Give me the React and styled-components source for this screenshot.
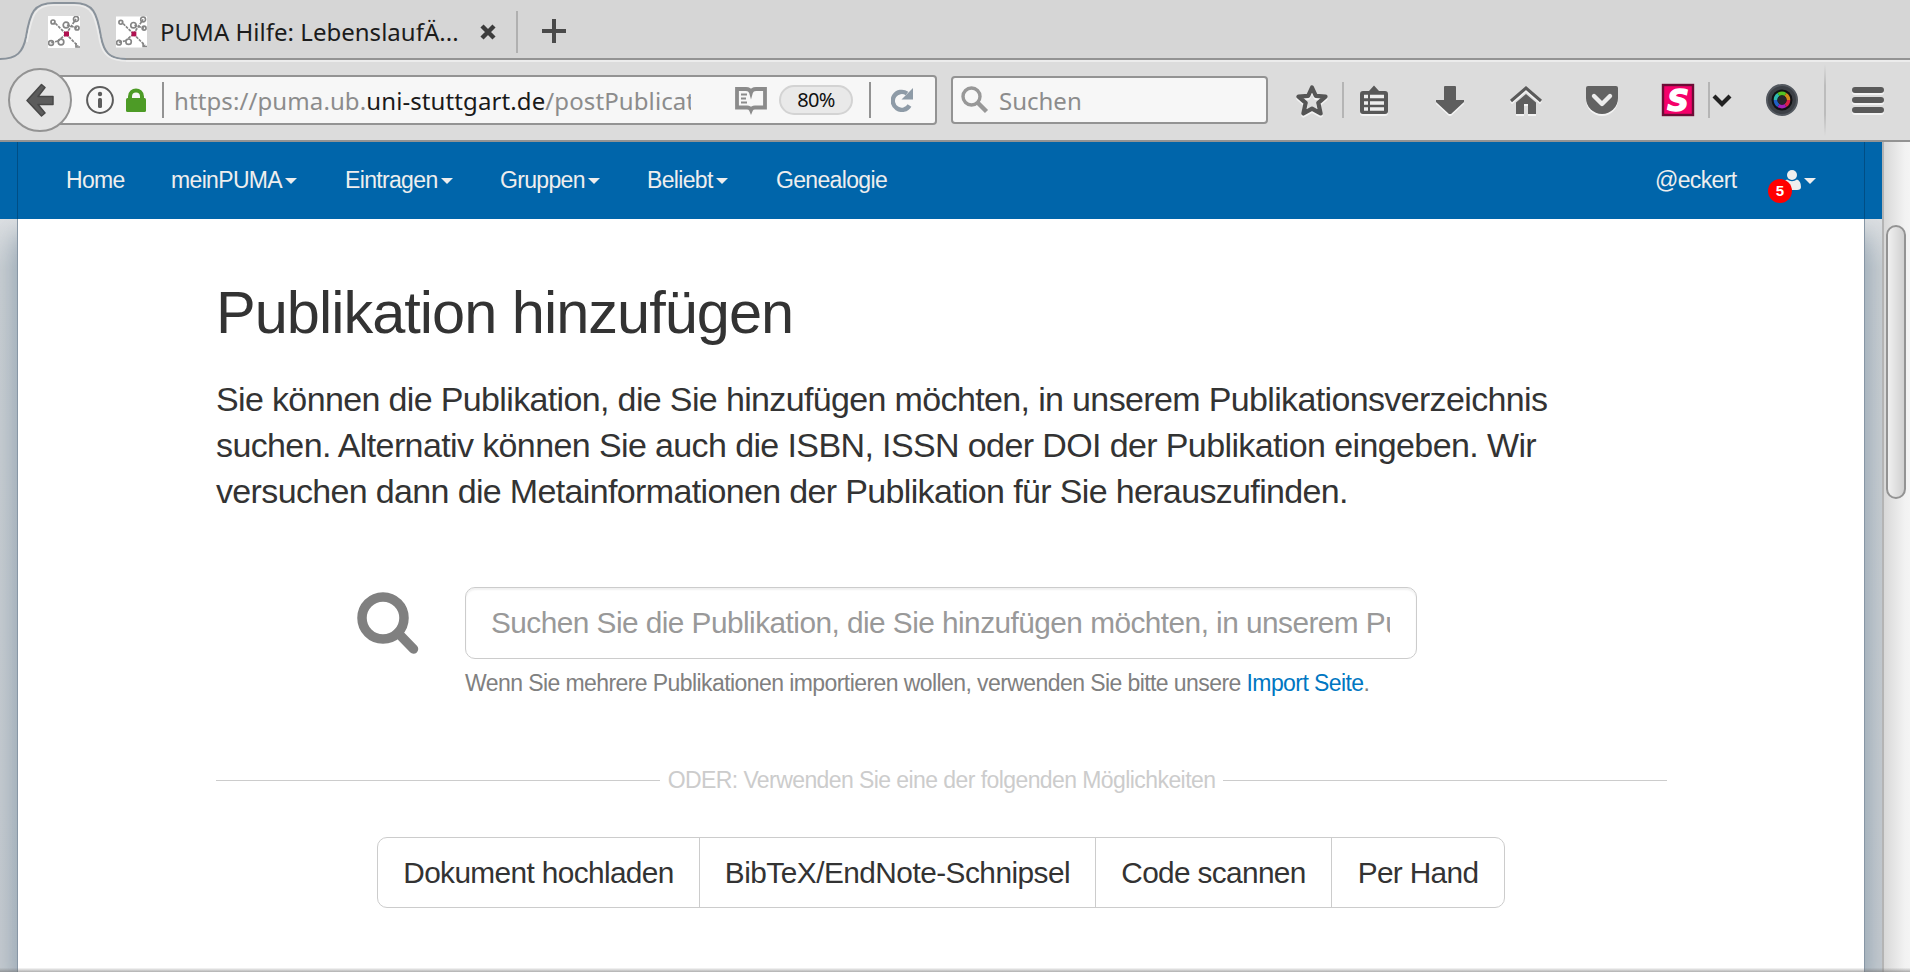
import React from 'react';
import styled, { createGlobalStyle, css } from 'styled-components';

const ui = '"Noto Sans", "Open Sans", sans-serif';
const sans = '"Liberation Sans", Arial, sans-serif';

const Global = createGlobalStyle`
  *, *::before, *::after { box-sizing: border-box; }
  html, body { margin: 0; padding: 0; overflow: hidden; }
  body { background: #dcdcdc; font-family: ${sans}; }
`;

const Window = styled.div`
  width: 1910px;
  height: 972px;
  display: flex;
  flex-direction: column;
  overflow: hidden;
`;

/* ---------- browser chrome ---------- */
const TabStrip = styled.div`
  position: relative;
  height: 62px;
  flex: none;
  display: flex;
  align-items: flex-start;
  background: #d6d6d6;
  border-bottom: 2px solid #ececec;
  box-shadow: inset 0 -2px 0 #939393;
`;
const ActiveTab = styled.svg`
  position: absolute;
  left: 0;
  top: 0;
`;
const Favicon = styled.svg`
  flex: none;
  position: relative;
  margin: 16px 0 0 ${(p) => p.$ml}px;
`;
const TabTitle = styled.div`
  font: 24px/34px ${ui};
  color: #1c1c1c;
  margin: 15px 0 0 13px;
  width: 301px;
  white-space: nowrap;
  letter-spacing: 0.02px;
`;
const TabClose = styled.svg`
  margin-top: 24px;
  margin-left: 19px;
`;
const TabDivider = styled.div`
  width: 2px;
  height: 42px;
  margin: 11px 0 0 20px;
  background: #b0b0b0;
`;
const NewTab = styled.svg`
  margin: 18px 0 0 23px;
`;

const Toolbar = styled.div`
  height: 80px;
  flex: none;
  display: flex;
  align-items: center;
  background: #dcdcdc;
  border-bottom: 2px solid #939393;
  padding: 0 26px 2px 8px;
`;
const BackButton = styled.div`
  width: 64px;
  height: 64px;
  flex: none;
  border-radius: 50%;
  border: 2px solid #939393;
  background: #e4e4e4;
  display: flex;
  align-items: center;
  justify-content: center;
  position: relative;
  z-index: 1;
`;
const UrlBar = styled.div`
  width: 885px;
  height: 50px;
  flex: none;
  margin-left: -20px;
  padding-left: 32px;
  border: 2px solid #939393;
  border-radius: 4px;
  background: #f7f7f7;
  display: flex;
  align-items: center;
`;
const Rule = styled.div`
  width: 2px;
  height: 36px;
  flex: none;
  background: ${(p) => p.$color || '#939393'};
  margin: 0 ${(p) => p.$mr || 0}px 0 ${(p) => p.$ml || 0}px;
`;
const Url = styled.div`
  width: 517px;
  overflow: hidden;
  white-space: nowrap;
  padding-top: 2px;
  font: 24px/34px ${ui};
  letter-spacing: 0.1px;
  color: #8c8c8c;
  span { color: #1a1a1a; }
`;
const ZoomLevel = styled.div`
  width: 74px;
  height: 30px;
  margin-left: 12px;
  border: 2px solid #d3d3d3;
  border-radius: 15px;
  background: #e9e9e9;
  font: 20px/25px ${ui};
  letter-spacing: -0.6px;
  text-align: center;
  color: #111;
`;
const SearchBox = styled.div`
  width: 317px;
  height: 48px;
  flex: none;
  margin-left: 14px;
  padding-left: 8px;
  border: 2px solid #939393;
  border-radius: 4px;
  background: #f7f7f7;
  display: flex;
  align-items: center;
  gap: 10px;
  font: 24px/34px ${ui};
  color: #8c8c8c;
  span { padding-top: 2px; }
`;
const Tool = styled.svg`
  flex: none;
  margin-left: ${(p) => p.$ml || 0}px;
  margin-top: ${(p) => p.$mt || 0}px;
  overflow: visible;
  ${(p) => p.$emboss && css`filter: drop-shadow(0 2px 0 rgba(255, 255, 255, 0.65));`}
`;
const FadingRule = styled.div`
  width: 2px;
  height: 72px;
  margin: 0 26px 0 26px;
  background: linear-gradient(#dcdcdc, #bcbcbc 30%, #bcbcbc 70%, #dcdcdc);
`;

/* ---------- page ---------- */
const Viewport = styled.div`
  flex: 1;
  min-height: 0;
  display: flex;
  position: relative;
  &::after {
    content: '';
    position: absolute;
    inset: auto 0 0 0;
    height: 4px;
    background: linear-gradient(rgba(120, 120, 120, 0.05), rgba(110, 110, 110, 0.55));
  }
`;
const Page = styled.div`
  width: 1882px;
  display: flex;
  flex-direction: column;
`;
const Navbar = styled.nav`
  height: 77px;
  flex: none;
  background: #0065aa;
  padding: 0 17px;
`;
const NavInner = styled.div`
  height: 100%;
  display: flex;
  align-items: center;
  border-left: 1px solid #004e85;
  border-right: 1px solid #004e85;
  padding: 0 48px 2px 48px;
`;
const NavItem = styled.a`
  width: ${(p) => p.$w}px;
  flex: none;
  display: flex;
  align-items: center;
  gap: 3px;
  font: 23px/32px ${sans};
  letter-spacing: -0.66px;
  color: #eee;
  white-space: nowrap;
`;
const Caret = styled.i`
  border: 6px solid transparent;
  border-top-color: #eee;
  border-bottom: 0;
  margin-top: 3px;
`;
const Spacer = styled.div`
  flex: 1;
`;
const UserMenu = styled.div`
  position: relative;
  display: flex;
  align-items: center;
  gap: 3px;
`;
const Badge = styled.span`
  position: absolute;
  left: -15px;
  top: 9px;
  width: 24px;
  height: 24px;
  border-radius: 50%;
  background: #ff0000;
  color: #fff;
  font: bold 15px/23px ${sans};
  text-align: center;
`;
const Backdrop = styled.div`
  flex: 1;
  display: flex;
  padding: 0 17px;
  background: linear-gradient(#dcdfe2, #c9cfd3 50px, #c5cbd0);
  overflow: hidden;
`;
const Sheet = styled.main`
  flex: 1;
  background: #fff;
  border: solid #8796a5;
  border-width: 0 1px;
  box-shadow: 0 16px 24px rgba(95, 122, 145, 0.6);
  padding: 0 197px 0 198px;
  display: flex;
  flex-direction: column;
  color: #333;
`;
const Title = styled.h1`
  margin: 61px 0 0;
  font: 400 59.5px/65px ${sans};
  letter-spacing: -0.98px;
  white-space: nowrap;
`;
const Lead = styled.p`
  margin: 31px 0 0;
  font: 34px/46px ${sans};
  white-space: nowrap;
`;
const LeadLine = styled.span`
  display: block;
  letter-spacing: ${(p) => p.$ls}px;
`;
const SearchRow = styled.div`
  display: flex;
  align-items: flex-start;
  margin-top: 73px;
  padding-left: 141px;
`;
const Field = styled.div`
  margin-left: 47px;
  width: 952px;
`;
const Input = styled.div`
  height: 72px;
  border: 1px solid #ccc;
  border-radius: 10px;
  box-shadow: inset 0 2px 2px rgba(0, 0, 0, 0.06);
  padding: 0 26px 0 25px;
  font: 29.8px/70px ${sans};
  color: #999;
`;
const Placeholder = styled.div`
  overflow: hidden;
  white-space: nowrap;
  letter-spacing: -0.54px;
`;
const Help = styled.div`
  margin-top: 8px;
  font: 23px/33px ${sans};
  height: 32px;
  letter-spacing: -0.58px;
  color: #808080;
  white-space: nowrap;
  a { color: #0077c2; }
`;
const Or = styled.div`
  display: flex;
  align-items: center;
  gap: 8px;
  margin-top: 65px;
  font: 23px/32px ${sans};
  letter-spacing: -0.58px;
  color: #ccc;
  white-space: nowrap;
  &::before, &::after {
    content: '';
    flex: 1;
    height: 1px;
    background: #ccc;
  }
`;
const ButtonGroup = styled.div`
  display: flex;
  margin: 41px 0 0 161px;
  width: 1128px;
  height: 71px;
  border: 1px solid #ccc;
  border-radius: 10px;
`;
const Choice = styled.button`
  width: ${(p) => p.$w}px;
  padding: 0;
  border: 0;
  border-left: ${(p) => (p.$first ? 0 : '1px solid #ccc')};
  background: none;
  font: 29.8px/69px ${sans};
  letter-spacing: ${(p) => p.$ls}px;
  color: #333;
  white-space: nowrap;
`;
const Scrollbar = styled.div`
  width: 28px;
  border-left: 2px solid #b4b4b4;
  background: linear-gradient(90deg, #d8d8d8, #f2f2f2 80%, #f4f4f4);
  padding: 83px 4px 0 2px;
`;
const Thumb = styled.div`
  height: 274px;
  border: 2px solid #939393;
  border-radius: 10px;
  background: linear-gradient(90deg, #f0f0f0, #d0d0d0);
`;

const Molecule = () => (
  <>
    <rect width="32" height="32" fill="#fff" />
    <g stroke="#858585" strokeWidth="1.7" fill="none">
      <path d="M18 18 6 6M18 18 28 3M18 18 10 25M18 18 30 30M19 9 29 12M10 25 2 27" strokeDasharray="3 1" />
      <circle cx="5" cy="6" r="2" /><circle cx="18" cy="9" r="2.8" /><circle cx="28" cy="3" r="2.5" />
      <circle cx="29" cy="12" r="2" /><circle cx="3" cy="27" r="2.4" /><circle cx="13" cy="26" r="2.8" />
      <path d="M28 27v4h4" />
    </g>
    <rect x="16" y="15.5" width="5" height="5" fill="#b01050" />
  </>
);

const navItems = [
  ['Home', 105, false],
  ['meinPUMA', 174, true],
  ['Eintragen', 155, true],
  ['Gruppen', 147, true],
  ['Beliebt', 129, true],
  ['Genealogie', 130, false],
];

const choices = [
  ['Dokument hochladen', 321, -0.62],
  ['BibTeX/EndNote-Schnipsel', 396, -0.52],
  ['Code scannen', 236, -0.65],
  ['Per Hand', 173, -0.65],
];

export default function App() {
  return (
    <Window>
      <Global />
      <TabStrip>
        <ActiveTab width="130" height="64" viewBox="0 0 130 64">
          <path d="M0 59C17 59 23 52 26 37C30 12 34 3 54 3H74C93 3 97 12 101 37C104 52 109 59 126 59V64H0Z" fill="#dcdcdc" />
          <path d="M0 59C17 59 23 52 26 37C30 12 34 3 54 3H74C93 3 97 12 101 37C104 52 109 59 126 59" fill="none" stroke="#89929b" strokeWidth="2" />
          <path d="M27 42C32 14 35 5 54 5H74C92 5 95 14 100 42C103 55 110 61 128 61" fill="none" stroke="#ececec" strokeWidth="1.6" />
        </ActiveTab>
        <Favicon $ml={48} width="32" height="32" viewBox="0 0 32 32"><Molecule /></Favicon>
        <Favicon $ml={36} width="31" height="32" viewBox="0 0 32 32"><Molecule /></Favicon>
        <TabTitle>PUMA Hilfe: LebenslaufÄ...</TabTitle>
        <TabClose width="16" height="16"><path d="M2 2 14 14M14 2 2 14" stroke="#3c3c3c" strokeWidth="4.4" /></TabClose>
        <TabDivider />
        <NewTab width="26" height="26"><path d="M13 1V25M1 13H25" stroke="#4a4a4a" strokeWidth="4" /></NewTab>
      </TabStrip>

      <Toolbar>
        <BackButton>
          <svg width="28" height="34" viewBox="0 0 28 34">
            <path d="M15.500 1.500 19 4.500 12 13.500H27V21.500H12L19 30 15.500 33 1 17.500Z" fill="#5c5c5c" stroke="#484848" strokeWidth="1.500" strokeLinejoin="round" />
          </svg>
        </BackButton>
        <UrlBar>
          <svg width="28" height="28" viewBox="0 0 28 28">
            <circle cx="14" cy="14" r="12.900" fill="none" stroke="#5c5c5c" strokeWidth="2" />
            <circle cx="14" cy="8" r="2.200" fill="#5c5c5c" /><rect x="12" y="12" width="4" height="10" rx="1.500" fill="#5c5c5c" />
          </svg>
          <Tool $ml={12} width="20" height="24" viewBox="0 0 20 24">
            <rect y="10" width="20" height="14" rx="1.500" fill="#4d9b26" />
            <path d="M4 12V8.500C4 0.500 16 0.500 16 8.500V12" fill="none" stroke="#4d9b26" strokeWidth="4" />
          </Tool>
          <Rule $ml={16} $mr={10} />
          <Url>https://puma.ub.<span>uni-stuttgart.de</span>/postPublicat</Url>
          <Tool $ml={44} width="32" height="26" viewBox="0 0 32 26">
            <path d="M2 2H11Q15 2 16 5.500Q17 2 21 2H30V20.500H20Q17 20.500 16 23Q15 20.500 12 20.500H2Z" fill="none" stroke="#8b8b8b" strokeWidth="3.800" />
            <path d="M6 7.500H12M6 11.500H11M6 15.500H12" stroke="#8b8b8b" strokeWidth="2" />
          </Tool>
          <ZoomLevel>80%</ZoomLevel>
          <Rule $ml={16} $mr={20} />
          <svg width="23" height="24" viewBox="0 0 23 24">
            <path d="M18.500 17.500A9 9 0 1 1 16 5.500" fill="none" stroke="#8e9ba7" strokeWidth="4.400" />
            <path d="M22 0V11.500H10.500Z" fill="#8e9ba7" />
          </svg>
        </UrlBar>
        <SearchBox>
          <svg width="28" height="28" viewBox="0 0 28 28">
            <circle cx="10.500" cy="10.500" r="8.500" fill="none" stroke="#989898" strokeWidth="3.400" />
            <path d="M16.500 16.500 25.500 25.500" stroke="#989898" strokeWidth="4.400" />
          </svg>
          <span>Suchen</span>
        </SearchBox>

        <Tool $emboss $ml={28} width="32" height="32" viewBox="0 0 32 32">
          <path d="M16 3.500 19.800 11.800 29.500 12.600 22.300 18.800 24.600 29.500 16 24.600 7.400 29.500 9.700 18.800 2.500 12.600 12.200 11.800Z" fill="none" stroke="#555" strokeWidth="4.200" strokeLinejoin="round" />
        </Tool>
        <Rule $ml={14} $mr={16} $color="#b5b5b5" />
        <Tool $emboss width="28" height="30" viewBox="0 0 28 30">
          <path d="M3 6H9L14 0.500 19 6H25Q28 6 28 9V26Q28 29 25 29H3Q0 29 0 26V9Q0 6 3 6Z" fill="#585858" />
          <path d="M10 11.500H24M10 18H24M10 24H24" stroke="#eee" strokeWidth="3.400" />
          <path d="M4 11.500H8M4 18H8M4 24H8" stroke="#eee" strokeWidth="3.600" />
        </Tool>
        <Tool $emboss $ml={48} width="28" height="28" viewBox="0 0 28 28">
          <path d="M9 0H19Q20 0 20 1V14H28V16L15 28H13L0 16V14H8V1Q8 0 9 0Z" fill="#5e5e5e" />
        </Tool>
        <Tool $emboss $ml={46} width="32" height="28" viewBox="0 0 32 28">
          <path d="M1 15 16 2 31 15" fill="none" stroke="#5a5a5a" strokeWidth="3" />
          <path d="M6 16.500 16 8 26 16.500V28H18V18H14V28H6Z" fill="#5e5e5e" />
        </Tool>
        <Tool $emboss $ml={44} width="32" height="28" viewBox="0 0 32 28">
          <path d="M2 0H30Q32 0 32 2V12A16 16 0 0 1 0 12V2Q0 0 2 0Z" fill="#626262" />
          <path d="M8 10 16 18 24 10" fill="none" stroke="#ececec" strokeWidth="4.400" strokeLinecap="round" strokeLinejoin="round" />
        </Tool>
        <Tool $ml={44} width="32" height="32" viewBox="0 0 32 32">
          <rect x="1" y="1" width="30" height="30" fill="#f5006a" stroke="#6e0c36" strokeWidth="2.400" />
          <text x="16" y="26.500" textAnchor="middle" fontFamily="DejaVu Sans" fontWeight="bold" fontStyle="oblique" fontSize="30" fill="#fff" stroke="#fff" strokeWidth="1.400">S</text>
        </Tool>
        <Rule $ml={14} $mr={2} $color="#b5b5b5" />
        <Tool width="20" height="14" viewBox="0 0 20 14"><path d="M2 3 10 11 18 3" fill="none" stroke="#222" strokeWidth="4.200" /></Tool>
        <Tool $ml={34} width="32" height="32" viewBox="0 0 32 32">
          <circle cx="16" cy="16" r="15" fill="#3c4046" stroke="#53585f" strokeWidth="2" /><circle cx="16" cy="16" r="10.500" fill="#101114" />
          <g fill="none" strokeWidth="3.600">
            <path d="M9.500 16A6.500 6.500 0 0 1 12.500 10.500" stroke="#2fb9b0" /><path d="M12.500 10.500A6.500 6.500 0 0 1 19.500 10.500" stroke="#55c222" />
            <path d="M19.500 10.500A6.500 6.500 0 0 1 22.500 16" stroke="#d08a1c" /><path d="M22.500 16A6.500 6.500 0 0 1 19.500 21.500" stroke="#d8204a" />
            <path d="M19.500 21.500A6.500 6.500 0 0 1 12.500 21.500" stroke="#a321b8" /><path d="M12.500 21.500A6.500 6.500 0 0 1 9.500 16" stroke="#2060c4" />
          </g>
          <circle cx="16" cy="16" r="4.500" fill="#26262a" />
        </Tool>
        <FadingRule />
        <Tool $emboss width="32" height="26" viewBox="0 0 32 26">
          <path d="M3 3H29M3 13H29M3 23H29" stroke="#5a5a5a" strokeWidth="6" strokeLinecap="round" />
        </Tool>
      </Toolbar>

      <Viewport>
        <Page>
          <Navbar>
            <NavInner>
              {navItems.map(([label, w, caret]) => (
                <NavItem key={label} $w={w}>{label}{caret ? <Caret /> : null}</NavItem>
              ))}
              <Spacer />
              <NavItem $w={128}>@eckert</NavItem>
              <UserMenu>
                <svg width="18" height="20" viewBox="0 0 18 20">
                  <circle cx="9" cy="5" r="5" fill="#eee" />
                  <path d="M4 9.500Q9 13 14 9.500Q18 11 18 17Q18 20 14 20H4Q0 20 0 17Q0 11 4 9.500Z" fill="#eee" />
                </svg>
                <Badge>5</Badge>
                <Caret />
              </UserMenu>
            </NavInner>
          </Navbar>
          <Backdrop>
            <Sheet>
              <Title>Publikation hinzufügen</Title>
              <Lead>
                <LeadLine $ls={-0.643}>Sie können die Publikation, die Sie hinzufügen möchten, in unserem Publikationsverzeichnis</LeadLine>
                <LeadLine $ls={-0.613}>suchen. Alternativ können Sie auch die ISBN, ISSN oder DOI der Publikation eingeben. Wir</LeadLine>
                <LeadLine $ls={-0.65}>versuchen dann die Metainformationen der Publikation für Sie herauszufinden.</LeadLine>
              </Lead>
              <SearchRow>
                <Tool $mt={5} width="61" height="62" viewBox="0 0 61 62">
                  <circle cx="26" cy="26" r="21" fill="none" stroke="#808080" strokeWidth="9.500" />
                  <path d="M41 41 56.500 57" stroke="#808080" strokeWidth="9.500" strokeLinecap="round" />
                </Tool>
                <Field>
                  <Input><Placeholder>Suchen Sie die Publikation, die Sie hinzufügen möchten, in unserem Pu</Placeholder></Input>
                  <Help>Wenn Sie mehrere Publikationen importieren wollen, verwenden Sie bitte unsere <a>Import Seite</a>.</Help>
                </Field>
              </SearchRow>
              <Or>ODER: Verwenden Sie eine der folgenden Möglichkeiten</Or>
              <ButtonGroup>
                {choices.map(([label, w, ls], i) => (
                  <Choice key={label} $first={i === 0} $w={w} $ls={ls}>{label}</Choice>
                ))}
              </ButtonGroup>
            </Sheet>
          </Backdrop>
        </Page>
        <Scrollbar><Thumb /></Scrollbar>
      </Viewport>
    </Window>
  );
}
